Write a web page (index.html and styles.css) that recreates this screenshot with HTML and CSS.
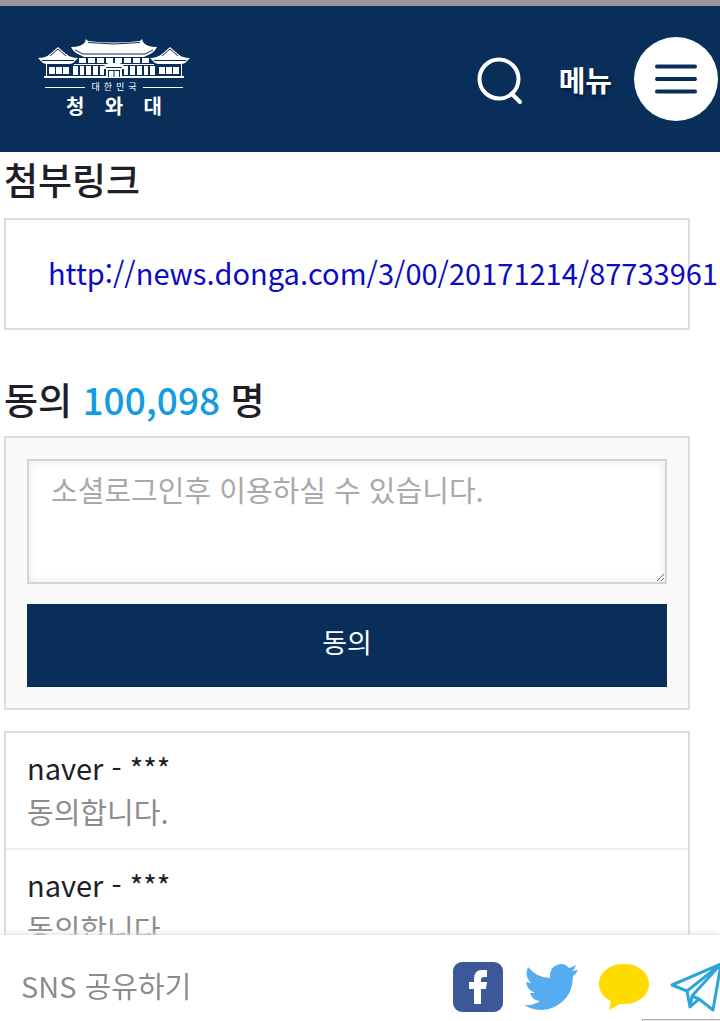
FILE: index.html
```html
<!DOCTYPE html>
<html lang="ko">
<head>
<meta charset="utf-8">
<meta name="viewport" content="width=device-width, initial-scale=1">
<title>대한민국 청와대</title>
<link rel="stylesheet" href="styles.css">
</head>
<body>
<header class="header">
  <a class="logo" href="#">
    <svg class="logo-house" viewBox="0 0 152 40" fill="#fff" aria-hidden="true">
      <path d="M48 0l2 2q26 3 52 0l2-2 1 3q3 5 14 5-3 6-9 8l-4 2H46l-4-2q-6-2-9-8 11 0 14-5z"/>
      <path d="M50 3.500q26 3 52 0M37 11l8 4h62l8-4" fill="none" stroke="#082e59"/>
      <path d="M41 19h7v5h-7zM50 19h7v5h-7zM59 19h7v5h-7zM68 19h7v5h-7zM77 19h7v5h-7zM86 19h7v5h-7zM95 19h7v5h-7zM104 19h7v5h-7z"/>
      <path d="M36 25h80v1H36zM6 37h140v2H6z"/>
      <g id="wing">
        <path d="M0 19q8 0 12-4l8-7 8 7q5 4 12 4l-5 5q-2 1-4 1H9q-2 0-4-1z"/>
        <path d="M12 17l8-7 8 7M4 21.500h32" fill="none" stroke="#082e59"/>
        <path d="M8 25h1v13H8zM11 28h6v7h-6zM18 28h6v7h-6zM25 28h6v7h-6zM35 27h5v9h-5zM42 27h4v9h-4zM48 27h5v9h-5zM55 27h5v9h-5zM62 27h4v9h-4z"/>
      </g>
      <use href="#wing" transform="matrix(-1 0 0 1 152 0)"/>
      <path d="M66 27l4-3h12l4 3v3H66zM68 30h16v8H68z"/>
      <path d="M68 28.500h16M70 31.500h12M70.500 32v6M76 32v6M81.500 32v6" fill="none" stroke="#082e59"/>
    </svg>
    <span class="logo-nation"><span>대</span><span>한</span><span>민</span><span>국</span></span>
    <span class="logo-name"><span>청</span><span>와</span><span>대</span></span>
  </a>
  <div class="header-tools">
    <button class="search" type="button" aria-label="검색">
      <svg viewBox="0 0 46 48" width="46" height="48" fill="none" stroke="#fff" stroke-width="4" stroke-linecap="round" aria-hidden="true"><circle cx="22" cy="22" r="19.500"/><path d="M35 37l8 8"/></svg>
    </button>
    <button class="menu" type="button">
      <span>메뉴</span>
      <svg viewBox="0 0 84 84" width="84" height="84" aria-hidden="true"><circle cx="42" cy="42" r="42" fill="#fff"/><path d="M23 29.500h38M23 42h38M23 54.500h38" stroke="#082e59" stroke-width="4" stroke-linecap="round"/></svg>
    </button>
  </div>
</header>

<main class="content">
  <h2 class="title">첨부링크</h2>
  <div class="link-box"><a href="#">http://news.donga.com/3/00/20171214/87733961</a></div>

  <h2 class="title">동의 <span class="count">100,098</span> 명</h2>
  <form class="agree">
    <textarea class="agree-text" aria-label="동의 내용" placeholder="소셜로그인후 이용하실 수 있습니다."></textarea>
    <button class="agree-button" type="button">동의</button>
  </form>

  <ul class="comments">
    <li class="comment"><p class="author">naver - ***</p><p class="message">동의합니다.</p></li>
    <li class="comment"><p class="author">naver - ***</p><p class="message">동의합니다.</p></li>
  </ul>
</main>

<footer class="share">
  <span class="share-label">SNS 공유하기</span>
  <nav class="share-links" aria-label="SNS 공유하기">
    <a href="#" aria-label="페이스북"><svg viewBox="0 0 50 50" width="50" height="50"><rect width="50" height="50" rx="9" fill="#3b5998"/><path d="M21 42V27h-5v-7h5v-3q0-9 8-9h5v7h-3q-3 0-3 3v2h6l-1 7h-5v15z" fill="#fff"/></svg></a>
    <a href="#" aria-label="트위터"><svg viewBox="0 0 54 46" width="54" height="46"><path fill="#55acee" d="M54 6q-2 4-5 6 0 17-11 26-8 7-20 8Q8 46 0 41q9 1 16-4-8-1-10-8h5q-8-3-9-11l5 1Q0 12 4 3q9 11 22 11-1-10 7-13 7-3 12 3 4-1 7-3-1 4-4 6z"/></svg></a>
    <a href="#" aria-label="카카오톡"><svg viewBox="0 0 50 46" width="50" height="46"><path fill="#ffdc00" d="M25 0c14 0 25 8 25 20s-11 20-25 20h-4l-11 6 2-9C5 34 0 28 0 20 0 8 11 0 25 0z"/></svg></a>
    <a href="#" aria-label="텔레그램"><svg viewBox="0 0 54 50" width="54" height="50" fill="none" stroke="#2ca5d9" stroke-width="3" stroke-linejoin="round"><path d="M2 23L51 2l-8 46-14-11-9 8-3-16zM17 29L51 2 22 34l-2 11M22 34l7 3"/></svg></a>
  </nav>
  <span class="status-edge"></span>
</footer>
</body>
</html>
```
FILE: styles.css
```css
* { box-sizing: border-box; }

html { overflow: hidden; }

body {
  margin: 0;
  min-height: 100vh;
  overflow: hidden;
  background: #fff;
  color: #1e1e28;
  font-family: "Noto Sans CJK KR", sans-serif;
  font-size: 29px;
  font-variant-ligatures: no-contextual;
}

button {
  border: 0;
  padding: 0;
  background: none;
  color: #fff;
  font: inherit;
  cursor: pointer;
}

svg { display: block; flex: none; }

.header {
  display: flex;
  align-items: center;
  justify-content: space-between;
  height: 152px;
  padding: 0 2px 0 38px;
  border-top: 6px solid #999798;
  background: #082e59;
}

.logo {
  display: flex;
  flex-direction: column;
  align-items: center;
  width: 152px;
  color: #fff;
  text-decoration: none;
}

.logo-house { width: 152px; height: 40px; }

.logo-nation {
  display: flex;
  align-items: center;
  gap: 4px;
  margin-top: 2px;
  font-size: 9px;
  line-height: 12px;
}

.logo-nation::before,
.logo-nation::after {
  content: "";
  width: 40px;
  height: 1px;
  background: #fff;
}

.logo-nation::before { margin-right: 2px; }
.logo-nation::after { margin-left: 2px; }

.logo-name {
  display: flex;
  justify-content: space-between;
  width: 96px;
  font-size: 20px;
  font-weight: 700;
  line-height: 26px;
}

.header-tools { display: flex; align-items: center; }

.search {
  margin-right: 36px;
  padding-top: 4px;
}

.menu {
  display: flex;
  align-items: center;
  gap: 22px;
  font-weight: 700;
  text-shadow: 1px 2px 3px #031a38;
}

.content { padding: 0 30px 0 4px; }

.title {
  margin: 0;
  padding-top: 2px;
  font-size: 37px;
  font-weight: 500;
  line-height: 50px;
}

.count { color: #149ce0; }

.link-box {
  margin: 14px 0 42px;
  padding: 30px 42px 34px;
  border: 2px solid #dcdcdc;
  line-height: 44px;
  white-space: nowrap;
}

.link-box a { color: #0b0bc4; text-decoration: none; }

.agree {
  display: flex;
  flex-direction: column;
  gap: 20px;
  margin: 12px 0 21px;
  padding: 21px;
  border: 2px solid #dcdcdc;
  background: #fafafa;
}

.agree-text {
  height: 125px;
  padding: 6px 22px;
  border: 2px solid #d4d4d4;
  background: #fff;
  box-shadow: inset 0 0 10px #e8e8e8;
  font: inherit;
  line-height: 44px;
}

.agree-text::placeholder { color: #a9a9a9; }

.agree-button {
  height: 83px;
  padding-bottom: 8px;
  background: #082e59;
  font-size: 27px;
}

.comments {
  margin: 0;
  padding: 0;
  border: 2px solid #dcdcdc;
  list-style: none;
}

.comment { padding: 12px 21px 15px; }
.comment + .comment { border-top: 2px solid #eee; }
.comment p { margin: 0; line-height: 44px; }
.message { color: #8c8c8c; }

.share {
  position: fixed;
  right: 0;
  bottom: 0;
  left: 0;
  display: flex;
  align-items: center;
  justify-content: space-between;
  height: 86px;
  padding: 18px 0 0 21px;
  overflow: hidden;
  background: #fff;
  box-shadow: 0 -1px 6px #ddd;
  color: #8c8c8c;
}

.share-label { padding-bottom: 4px; }

.share-links {
  display: flex;
  align-items: center;
  gap: 21px;
  margin-right: -4px;
}

.status-edge {
  position: absolute;
  right: 0;
  bottom: 0;
  width: 78px;
  height: 2px;
  border-top: 1px solid #aaa;
  border-left: 1px solid #aaa;
  background: #eee;
}
```
